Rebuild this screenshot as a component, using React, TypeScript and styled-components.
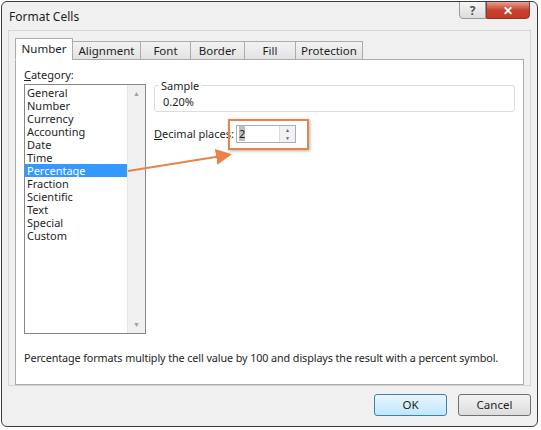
import React from "react";
import styled, { createGlobalStyle } from "styled-components";

const Global = createGlobalStyle`
  html, body { margin: 0; padding: 0; background: #fff; }
  body { font-family: "Noto Sans", "Open Sans", sans-serif; font-size: 11px; color: #1e1e1e; }
`;

const Dialog = styled.div`
  position: relative;
  width: 537px;
  height: 426px;
  margin: 1px 0 0 1px;
  border: 1px solid #3c3c3c;
  border-radius: 6px;
  background: #f0f0f0;
  box-sizing: border-box;
  display: flex;
  flex-direction: column;
  overflow: hidden;
`;

const TitleBar = styled.div`
  height: 28px;
  display: flex;
  align-items: flex-start;
  justify-content: space-between;
  padding-left: 7px;
`;

const Title = styled.div`
  font-size: 12px;
  margin-top: 6px;
`;

const WinButtons = styled.div`
  display: flex;
  margin-right: 7px;
  margin-top: -1px;
`;

const WinBtn = styled.div<{ $close?: boolean }>`
  width: ${p => (p.$close ? 44 : 27)}px;
  height: 18px;
  display: flex;
  align-items: center;
  justify-content: center;
  border: 1px solid ${p => (p.$close ? "#8c3a2e" : "#9a9a9a")};
  border-radius: ${p => (p.$close ? "0 0 4px 0" : "0 0 0 4px")};
  background: ${p => (p.$close ? "linear-gradient(#e8a093, #c7432f 50%, #c33a26)" : "linear-gradient(#f6f6f6, #dcdcdc)")};
  color: ${p => (p.$close ? "#fff" : "#555")};
  font-size: 12px;
  font-weight: bold;
  box-sizing: border-box;
`;

const Frame = styled.div`
  margin: 0 6px;
  border: 1px solid #d6d6d6;
  border-bottom: none;
  padding: 7px 6px 0 6px;
  flex: 1;
  display: flex;
  flex-direction: column;
`;

const Tabs = styled.div`
  display: flex;
  align-items: flex-end;
  height: 21px;
  position: relative;
  z-index: 1;
`;

const Tab = styled.div<{ $active?: boolean; $w: number }>`
  width: ${p => p.$w}px;
  height: ${p => (p.$active ? 22 : 19)}px;
  box-sizing: border-box;
  border: 1px solid #acacac;
  border-bottom: ${p => (p.$active ? "1px solid #fff" : "1px solid #acacac")};
  margin-left: ${p => (p.$active ? 0 : -1)}px;
  background: ${p => (p.$active ? "#fff" : "linear-gradient(#f2f2f2, #e3e3e3)")};
  display: flex;
  align-items: center;
  justify-content: center;
  font-size: 11.5px;
  margin-bottom: -1px;
`;

const Panel = styled.div`
  background: #fff;
  border: 1px solid #acacac;
  height: 326px;
  box-sizing: border-box;
  padding: 8px 8px 0 8px;
  display: flex;
  flex-direction: column;
`;

const Body = styled.div`
  display: flex;
  gap: 8px;
`;

const LeftCol = styled.div`
  display: flex;
  flex-direction: column;
`;

const Label = styled.div`
  height: 14px;
  line-height: 14px;
  margin-bottom: 2px;
`;

const ListBox = styled.div`
  width: 122px;
  height: 250px;
  border: 1px solid #828790;
  box-sizing: border-box;
  display: flex;
`;

const Items = styled.div`
  flex: 1;
  padding-top: 1px;
`;

const Item = styled.div<{ $sel?: boolean }>`
  height: 13px;
  line-height: 13px;
  font-size: 11px;
  padding-left: 2px;
  background: ${p => (p.$sel ? "#3399ff" : "transparent")};
  color: ${p => (p.$sel ? "#fff" : "#1e1e1e")};
`;

const Scroll = styled.div`
  width: 18px;
  background: #f0f0f0;
  border-left: 1px solid #e6e6e6;
  display: flex;
  flex-direction: column;
  justify-content: space-between;
  align-items: center;
  color: #a0a0a0;
  font-size: 7px;
  padding: 4px 0;
  box-sizing: border-box;
`;

const RightCol = styled.div`
  flex: 1;
  display: flex;
  flex-direction: column;
  padding-top: 10px;
`;

const Group = styled.fieldset`
  margin: 0;
  border: 1px solid #dcdcdc;
  border-radius: 3px;
  padding: 0 8px 4px 8px;
  height: 34px;
  box-sizing: border-box;
  legend { padding: 0 2px; margin-left: -4px; font-size: 11px; }
`;

const SampleText = styled.div`
  line-height: 14px;
  margin-top: 2px;
`;

const DecRow = styled.div`
  display: flex;
  align-items: center;
  margin-top: 13px;
  gap: 0;
`;

const Spin = styled.div`
  position: relative;
  width: 60px;
  height: 18px;
  border: 1px solid #abadb3;
  box-sizing: border-box;
  display: flex;
  align-items: center;
  padding-left: 2px;
  margin-left: 2px;
`;

const Sel = styled.span`
  background: #c0c0c0;
`;

const SpinBtns = styled.div`
  margin-left: auto;
  width: 15px;
  height: 16px;
  display: flex;
  flex-direction: column;
  border-left: 1px solid #dcdcdc;
  div { flex: 1; display: flex; align-items: center; justify-content: center; font-size: 5px; color: #5a5a8a; background: #f2f2f2; }
`;

const Highlight = styled.div`
  position: absolute;
  left: -9px;
  top: -7px;
  width: 81px;
  height: 31px;
  border: 2px solid #e8834a;
  box-sizing: border-box;
  box-shadow: 1px 1px 3px rgba(0,0,0,0.3);
`;

const Desc = styled.div`
  margin-top: 16px;
  font-size: 10.8px;
  white-space: nowrap;
  letter-spacing: -0.1px;
`;

const Footer = styled.div`
  height: 42px;
  border-top: 1px solid #d6d6d6;
  margin: 0 6px;
  display: flex;
  justify-content: flex-end;
  align-items: flex-start;
  gap: 11px;
  padding-top: 8px;
  box-sizing: border-box;
`;

const Btn = styled.div<{ $primary?: boolean }>`
  width: 73px;
  height: 22px;
  box-sizing: border-box;
  border: 1px solid ${p => (p.$primary ? "#3c7fb1" : "#707070")};
  border-radius: 3px;
  background: ${p => (p.$primary ? "linear-gradient(#eaf6fd, #bee6fd)" : "linear-gradient(#f2f2f2, #dddddd)")};
  display: flex;
  align-items: center;
  justify-content: center;
  font-size: 11.5px;
`;

const Arrow = styled.svg`
  position: absolute;
  left: 0;
  top: 0;
  pointer-events: none;
`;

const cats = ["General","Number","Currency","Accounting","Date","Time","Percentage","Fraction","Scientific","Text","Special","Custom"];

export default function App() {
  return (
    <>
      <Global />
      <Dialog>
        <TitleBar>
          <Title>Format Cells</Title>
          <WinButtons>
            <WinBtn>?</WinBtn>
            <WinBtn $close>✕</WinBtn>
          </WinButtons>
        </TitleBar>
        <Frame>
          <Tabs>
            <Tab $active $w={58}>Number</Tab>
            <Tab $w={69}>Alignment</Tab>
            <Tab $w={51}>Font</Tab>
            <Tab $w={55}>Border</Tab>
            <Tab $w={52}>Fill</Tab>
            <Tab $w={68}>Protection</Tab>
          </Tabs>
          <Panel>
            <Body>
              <LeftCol>
                <Label><u>C</u>ategory:</Label>
                <ListBox>
                  <Items>
                    {cats.map(c => <Item key={c} $sel={c === "Percentage"}>{c}</Item>)}
                  </Items>
                  <Scroll><span>▲</span><span>▼</span></Scroll>
                </ListBox>
              </LeftCol>
              <RightCol>
                <Group>
                  <legend>Sample</legend>
                  <SampleText>0.20%</SampleText>
                </Group>
                <DecRow>
                  <span><u>D</u>ecimal places:</span>
                  <Spin>
                    <Sel>2</Sel>
                    <SpinBtns><div>▲</div><div>▼</div></SpinBtns>
                    <Highlight />
                  </Spin>
                </DecRow>
              </RightCol>
            </Body>
            <Desc>Percentage formats multiply the cell value by 100 and displays the result with a percent symbol.</Desc>
          </Panel>
        </Frame>
        <Footer>
          <Btn $primary>OK</Btn>
          <Btn>Cancel</Btn>
        </Footer>
        <Arrow width="537" height="426">
          <defs>
            <marker id="ah" markerWidth="8" markerHeight="8" refX="6" refY="4" orient="auto">
              <path d="M0,0 L8,4 L0,8 z" fill="#e8834a" />
            </marker>
          </defs>
          <line x1="126" y1="169" x2="226" y2="153" stroke="#e8834a" strokeWidth="2" markerEnd="url(#ah)" />
        </Arrow>
      </Dialog>
    </>
  );
}
